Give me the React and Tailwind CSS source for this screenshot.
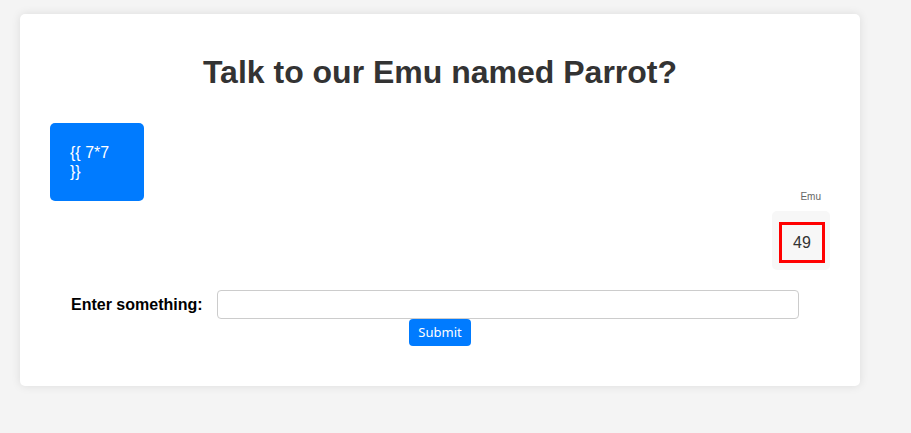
import React from 'react';

export default function App() {
    return (
        <div className="min-h-screen w-full bg-[#f4f4f4] pt-[14px] pl-[20px] font-['Liberation_Sans',Arial,sans-serif]">
            <div className="w-[840px] rounded-[5px] bg-white px-[30px] pt-[40px] pb-[40px] shadow-[0_0_10px_rgba(0,0,0,0.1)]">
                {/* Header */}
                <h1 className="text-center text-[32px] font-bold leading-[37px] text-[#333]">
                    Talk to our Emu named Parrot?
                </h1>

                {/* Chat */}
                <div className="mt-[32px] flex flex-col">
                    <div className="w-[94px] rounded-[5px] bg-[#007bff] px-[20px] py-[20px] text-[16px] leading-[19px] text-white">
                        {'{{ 7*7 }}'}
                    </div>
                    <div className="mt-[-10px] flex flex-col items-end">
                        <span className="mr-[9px] text-[10px] leading-[12px] text-[#666]">Emu</span>
                        <div className="mt-[8px] rounded-[5px] bg-[#f7f7f7] pt-[11px] pb-[7px] pl-[7px] pr-[5px]">
                            <div className="flex h-[41px] w-[46px] items-center justify-center border-[3px] border-[#ff0000] text-[16px] text-[#333]">
                                49
                            </div>
                        </div>
                    </div>
                </div>

                {/* Form */}
                <form className="mt-[20px] flex flex-col items-center" onSubmit={(e) => e.preventDefault()}>
                    <div className="flex w-full items-center pl-[21px] pr-[31px]">
                        <label className="text-[16px] font-bold text-black">Enter something:</label>
                        <input type="text" className="ml-[14px] h-[29px] flex-1 rounded-[4px] border border-[#ccc] px-2 outline-none" />
                    </div>
                    <button type="submit" className="h-[27px] w-[62px] rounded-[4px] bg-[#007bff] text-[13px] text-white font-['Noto_Sans',sans-serif]">
                        Submit
                    </button>
                </form>
            </div>
        </div>
    );
}
